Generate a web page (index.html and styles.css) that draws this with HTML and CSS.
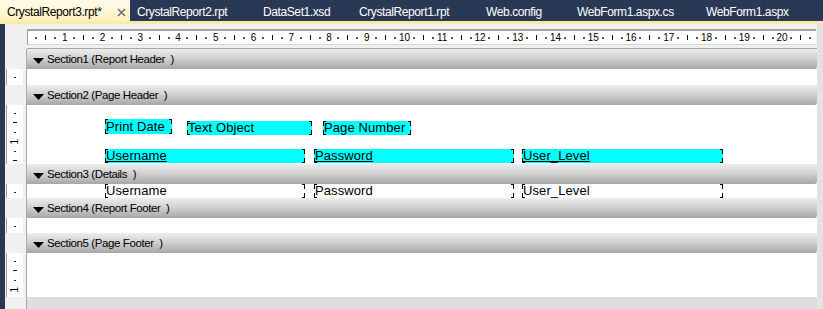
FILE: index.html
```html
<!DOCTYPE html>
<html lang="en">
<head>
<meta charset="utf-8">
<title>CrystalReport3.rpt</title>
<link rel="stylesheet" href="styles.css">
</head>
<body>
<div class="tabbar">
  <div class="tab t1 active"><span>CrystalReport3.rpt*</span><svg class="close" width="9" height="9" viewBox="0 0 9 9"><path d="M1 1L8 8M8 1L1 8" stroke="#6f6f6f" stroke-width="1.6" fill="none"/></svg></div>
  <div class="tab t2">CrystalReport2.rpt</div>
  <div class="tab t3">DataSet1.xsd</div>
  <div class="tab t4">CrystalReport1.rpt</div>
  <div class="tab t5">Web.config</div>
  <div class="tab t6">WebForm1.aspx.cs</div>
  <div class="tab t7">WebForm1.aspx</div>
</div>
<div class="stripe"></div>
<div class="main">
  <div class="frame"></div>
  <div class="editor">
    <!-- ruler row -->
    <div class="lc top"></div>
    <div class="topc">
      <div class="ruler">
        <i class="d"></i><i class="k"></i><i class="d"></i><b>1</b>
        <i class="d"></i><i class="k"></i><i class="d"></i><b>2</b>
        <i class="d"></i><i class="k"></i><i class="d"></i><b>3</b>
        <i class="d"></i><i class="k"></i><i class="d"></i><b>4</b>
        <i class="d"></i><i class="k"></i><i class="d"></i><b>5</b>
        <i class="d"></i><i class="k"></i><i class="d"></i><b>6</b>
        <i class="d"></i><i class="k"></i><i class="d"></i><b>7</b>
        <i class="d"></i><i class="k"></i><i class="d"></i><b>8</b>
        <i class="d"></i><i class="k"></i><i class="d"></i><b>9</b>
        <i class="d"></i><i class="k"></i><i class="d"></i><b>10</b>
        <i class="d"></i><i class="k"></i><i class="d"></i><b>11</b>
        <i class="d"></i><i class="k"></i><i class="d"></i><b>12</b>
        <i class="d"></i><i class="k"></i><i class="d"></i><b>13</b>
        <i class="d"></i><i class="k"></i><i class="d"></i><b>14</b>
        <i class="d"></i><i class="k"></i><i class="d"></i><b>15</b>
        <i class="d"></i><i class="k"></i><i class="d"></i><b>16</b>
        <i class="d"></i><i class="k"></i><i class="d"></i><b>17</b>
        <i class="d"></i><i class="k"></i><i class="d"></i><b>18</b>
        <i class="d"></i><i class="k"></i><i class="d"></i><b>19</b>
        <i class="d"></i><i class="k"></i><i class="d"></i><b>20</b>
        <i class="d"></i><i class="k"></i><i class="d"></i>
      </div>
    </div>
    <div class="rc"></div>

    <!-- Section1 -->
    <div class="lc"></div>
    <div class="hdr"><svg class="tri" width="11" height="6" viewBox="0 0 11 6"><path d="M0 0H11L5.5 6Z" fill="#000"/></svg><span>Section1 (Report Header &nbsp;)</span></div>
    <div class="rc"></div>
    <div class="lc body"><div class="vr"><i class="d"></i></div></div>
    <div class="bd"></div>
    <div class="rc"></div>

    <!-- Section2 -->
    <div class="lc"></div>
    <div class="hdr"><svg class="tri" width="11" height="6" viewBox="0 0 11 6"><path d="M0 0H11L5.5 6Z" fill="#000"/></svg><span>Section2 (Page Header &nbsp;)</span></div>
    <div class="rc"></div>
    <div class="lc body"><div class="vr"><i class="d"></i><i class="k"></i><i class="d"></i><b>1</b><i class="d"></i><i class="k"></i></div></div>
    <div class="bd">
      <div class="f cy f-pd">Print Date</div>
      <div class="f cy f-to">Text Object</div>
      <div class="f cy f-pn">Page Number</div>
      <div class="f cy u c1 r2">Username</div>
      <div class="f cy u c2 r2">Password</div>
      <div class="f cy u c3 r2">User_Level</div>
    </div>
    <div class="rc"></div>

    <!-- Section3 -->
    <div class="lc"></div>
    <div class="hdr"><svg class="tri" width="11" height="6" viewBox="0 0 11 6"><path d="M0 0H11L5.5 6Z" fill="#000"/></svg><span>Section3 (Details &nbsp;)</span></div>
    <div class="rc"></div>
    <div class="lc body"><div class="vr"><i class="d"></i></div></div>
    <div class="bd">
      <div class="f c1 r0">Username</div>
      <div class="f c2 r0">Password</div>
      <div class="f c3 r0">User_Level</div>
    </div>
    <div class="rc"></div>

    <!-- Section4 -->
    <div class="lc"></div>
    <div class="hdr"><svg class="tri" width="11" height="6" viewBox="0 0 11 6"><path d="M0 0H11L5.5 6Z" fill="#000"/></svg><span>Section4 (Report Footer &nbsp;)</span></div>
    <div class="rc"></div>
    <div class="lc body"><div class="vr"><i class="d"></i></div></div>
    <div class="bd"></div>
    <div class="rc"></div>

    <!-- Section5 -->
    <div class="lc"></div>
    <div class="hdr"><svg class="tri" width="11" height="6" viewBox="0 0 11 6"><path d="M0 0H11L5.5 6Z" fill="#000"/></svg><span>Section5 (Page Footer &nbsp;)</span></div>
    <div class="rc"></div>
    <div class="lc body"><div class="vr"><i class="d"></i><i class="k"></i><i class="d"></i><b>1</b></div></div>
    <div class="bd"></div>
    <div class="rc"></div>

    <!-- bottom -->
    <div class="lc"></div>
    <div class="btm"></div>
    <div class="rc"></div>
  </div>
</div>
</body>
</html>
```

FILE: styles.css
```css
* { box-sizing: border-box; }
html, body { margin: 0; padding: 0; }
body {
  width: 823px;
  height: 309px;
  overflow: hidden;
  background: #293955;
  font-family: "Liberation Sans", Arial, sans-serif;
}

/* document tabs */
.tabbar { display: flex; height: 21px; background: #293955; }
.tab {
  flex: none;
  height: 21px;
  padding: 3px 0 0 7px;
  font-size: 12px;
  line-height: 18px;
  letter-spacing: -0.4px;
  color: #fff;
  white-space: nowrap;
}
.tab.active {
  display: flex;
  align-items: flex-start;
  color: #000;
  background: linear-gradient(#fffbea, #fdf0bf);
}
.close { flex: none; margin: 5px 4px 0 auto; }
.t1 { width: 130px; }
.t2 { width: 126px; }
.t3 { width: 96px; }
.t4 { width: 127px; }
.t5 { width: 91px; }
.t6 { width: 129px; }
.t7 { flex: 1; }
.stripe { height: 3px; background: #fdeaa6; }

/* editor */
.main { display: flex; height: 285px; }
.frame { flex: none; width: 5px; background: #293955; }
.editor {
  flex: 1;
  display: grid;
  grid-template-columns: 22px 790px 6px;
  grid-template-rows: 25px 20px 16px 20px 59px 20px 14px 20px 15px 20px 44px 12px;
  background: #f0f0f0;
}

/* left vertical ruler column */
.lc { background: #f0f0f0; border-right: 1px solid #a9a9a9; }
.lc.top { border-right: none; }
.lc.body { padding: 0 3px 0 1px; }
.vr {
  height: 100%;
  background: #fff;
  border-left: 1px solid #a0a0a0;
  display: flex;
  flex-direction: column;
  padding-top: 3.7px;
  padding-right: 1px;
  overflow: hidden;
}
.vr > * {
  flex: none;
  height: 9.449px;
  display: flex;
  align-items: center;
  justify-content: center;
}
.vr .d::before { content: ""; width: 2px; height: 1px; background: #222; }
.vr .k::before { content: ""; width: 4px; height: 1px; background: #111; }
.vr b {
  font-weight: normal;
  font-size: 10px;
  line-height: 9px;
  transform: rotate(-90deg);
}

/* right column */
.rc { background: #e2e2e2; }

/* horizontal ruler */
.topc { padding-top: 5px; border-bottom: 1px solid #a8a8a8; background: #f0f0f0; }
.ruler {
  width: 789px;
  height: 16px;
  background: #fff;
  border-top: 2px solid #a0a0a0;
  border-left: 1px solid #a0a0a0;
  border-bottom: 1px solid #d6d6d6;
  display: flex;
  padding-left: 3.7px;
  overflow: hidden;
}
.ruler > * {
  flex: none;
  width: 9.449px;
  display: flex;
  justify-content: center;
  align-items: center;
}
.ruler .d::before { content: ""; width: 2px; height: 2px; background: #555; }
.ruler .k::before { content: ""; width: 1px; height: 5px; background: #111; }
.ruler b {
  font-weight: normal;
  font-size: 10px;
  line-height: 13px;
  color: #000;
}

/* section headers */
.hdr {
  display: flex;
  align-items: center;
  padding-left: 6px;
  background: linear-gradient(#ededed, #d2d2d2 45%, #a7a7a7);
  border-radius: 0 3px 3px 0;
  font-size: 11.5px;
  letter-spacing: -0.4px;
  color: #000;
  white-space: nowrap;
}
.tri { flex: none; margin: 3px 3px 0 0; }

/* section bodies */
.bd { position: relative; background: #fff; }
.btm { background: #dedede; }

/* report fields */
.f {
  position: absolute;
  height: 14px;
  padding-left: 1px;
  font-size: 13px;
  line-height: 14px;
  letter-spacing: 0.1px;
  color: #000;
  white-space: nowrap;
  overflow: hidden;
  background-image:
    linear-gradient(#000, #000), linear-gradient(#000, #000),
    linear-gradient(#000, #000), linear-gradient(#000, #000),
    linear-gradient(#000, #000), linear-gradient(#000, #000),
    linear-gradient(#000, #000), linear-gradient(#000, #000);
  background-repeat: no-repeat;
  background-position:
    left top, left top, right top, right top,
    left bottom, left bottom, right bottom, right bottom;
  background-size:
    3px 1px, 1px 5px, 3px 1px, 1px 5px,
    3px 1px, 1px 5px, 3px 1px, 1px 5px;
}
.cy { background-color: #00ffff; }
.u { text-decoration: underline; }
.f-pd { left: 78px; top: 14px; width: 67px; height: 15px; line-height: 15px; }
.f-to { left: 160px; top: 16px; width: 125px; }
.f-pn { left: 296px; top: 16px; width: 88px; }
.c1 { left: 78px; width: 200px; }
.c2 { left: 287px; width: 200px; }
.c3 { left: 495px; width: 201px; }
.r2 { top: 44px; }
.r0 { top: 0; }
```
